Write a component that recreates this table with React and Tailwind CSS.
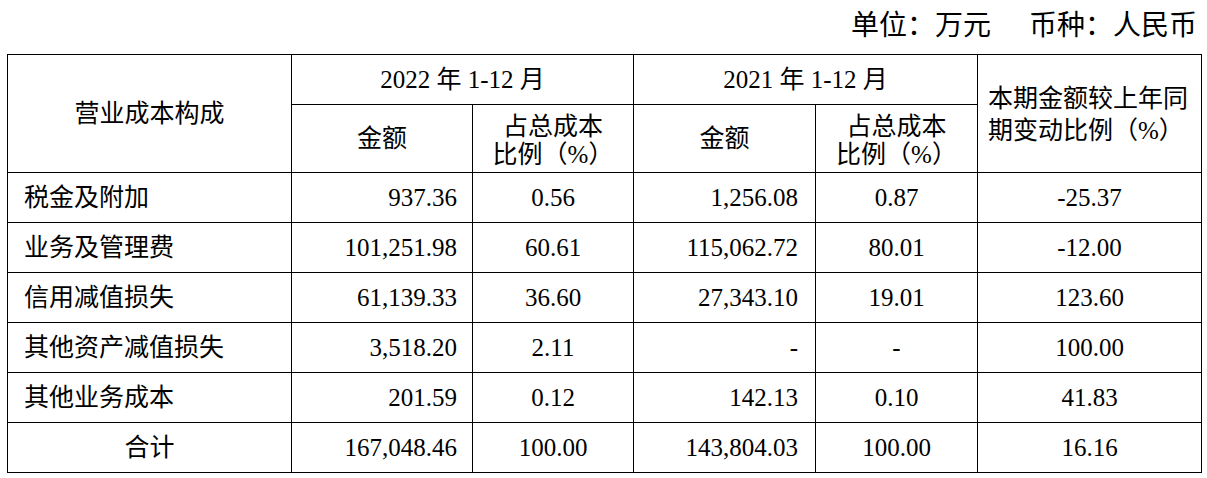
const rows = [
  { name: "税金及附加", a: "937.36", p: "0.56", b: "1,256.08", q: "0.87", c: "-25.37" },
  { name: "业务及管理费", a: "101,251.98", p: "60.61", b: "115,062.72", q: "80.01", c: "-12.00" },
  { name: "信用减值损失", a: "61,139.33", p: "36.60", b: "27,343.10", q: "19.01", c: "123.60" },
  { name: "其他资产减值损失", a: "3,518.20", p: "2.11", b: "-", q: "-", c: "100.00" },
  { name: "其他业务成本", a: "201.59", p: "0.12", b: "142.13", q: "0.10", c: "41.83" },
  { name: "合计", a: "167,048.46", p: "100.00", b: "143,804.03", q: "100.00", c: "16.16", total: true },
]

const font = { fontFamily: '"Liberation Serif", "Noto Sans CJK SC", serif' }

function App() {
  return (
    <div className="w-[1207px] h-[478px] bg-white text-black overflow-hidden" style={font}>
      {/* unit caption */}
      <div className="h-[54px] flex items-center justify-end pr-[10px] pb-[2px] text-[28px] leading-none">
        <span>单位：万元</span>
        <span className="ml-[38px]">币种：人民币</span>
      </div>

      <table className="ml-[7px] w-[1194px] table-fixed border-collapse text-[25px] leading-none">
        <colgroup>
          <col className="w-[284px]" />
          <col className="w-[181px]" />
          <col className="w-[161px]" />
          <col className="w-[182px]" />
          <col className="w-[162px]" />
          <col className="w-[224px]" />
        </colgroup>
        <thead>
          <tr className="h-[50px]">
            <th rowSpan={2} className="border border-black font-normal text-center align-middle p-0">
              营业成本构成
            </th>
            <th colSpan={2} className="border border-black font-normal text-center align-middle p-0">
              2022 年 1-12 月
            </th>
            <th colSpan={2} className="border border-black font-normal text-center align-middle p-0">
              2021 年 1-12 月
            </th>
            <th rowSpan={2} className="border border-black font-normal text-left align-middle pl-[10px] pt-[2px] leading-[32px]">
              本期金额较上年同
              <br />
              期变动比例（%）
            </th>
          </tr>
          <tr className="h-[68px]">
            <th className="border border-black font-normal text-center align-middle p-0">金额</th>
            <th className="border border-black font-normal text-center align-middle pt-[5px] leading-[28px]">
              占总成本
              <br />
              比例（%）
            </th>
            <th className="border border-black font-normal text-center align-middle p-0">金额</th>
            <th className="border border-black font-normal text-center align-middle pt-[5px] leading-[28px]">
              占总成本
              <br />
              比例（%）
            </th>
          </tr>
        </thead>
        <tbody>
          {rows.map((r) => (
            <tr key={r.name} className="h-[50px]">
              <td
                className={
                  r.total
                    ? "border border-black text-center align-middle p-0"
                    : "border border-black text-left align-middle pl-[16px]"
                }
              >
                {r.name}
              </td>
              <td className="border border-black text-right align-middle pr-[15px]">{r.a}</td>
              <td className="border border-black text-center align-middle p-0">{r.p}</td>
              <td className="border border-black text-right align-middle pr-[17px]">{r.b}</td>
              <td className="border border-black text-center align-middle p-0">{r.q}</td>
              <td className="border border-black text-center align-middle p-0">{r.c}</td>
            </tr>
          ))}
        </tbody>
      </table>
    </div>
  )
}

export default App
